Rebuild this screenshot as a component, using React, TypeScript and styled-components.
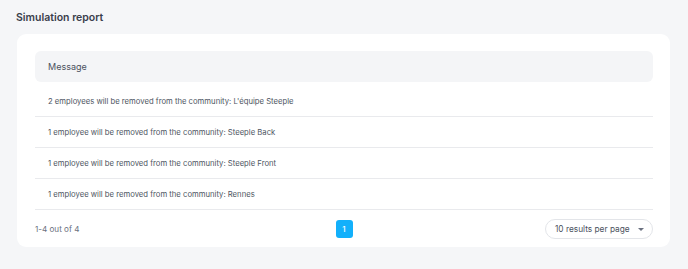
import React from 'react';
import styled, { createGlobalStyle } from 'styled-components';

const GlobalStyle = createGlobalStyle`
  html, body {
    margin: 0;
    padding: 0;
    background: #f5f6f8;
    font-family: Inter, "Noto Sans", sans-serif;
  }
`;

const Page = styled.div`
  width: 688px;
  height: 269px;
  box-sizing: border-box;
  padding: 11px 18px 0 16px;
`;

const Title = styled.h1`
  margin: 0 0 9px 0;
  font-size: 10.5px;
  line-height: 14px;
  font-weight: 600;
  color: #3a404c;
`;

const Card = styled.div`
  margin-left: 1px;
  background: #ffffff;
  border-radius: 9px;
  padding: 17px 17px 8px 18px;
`;

const HeaderRow = styled.div`
  display: flex;
  align-items: center;
  height: 31px;
  margin-bottom: 4px;
  padding: 0 13px;
  background: #f4f5f7;
  border-radius: 6px;
  font-size: 9px;
  color: #4b5260;
`;

const Row = styled.div`
  display: flex;
  align-items: center;
  height: 30px;
  padding: 0 13px;
  border-bottom: 1px solid #e9eaed;
  font-size: 7.7px;
  color: #4e5562;
`;

const Footer = styled.div`
  display: grid;
  grid-template-columns: 1fr auto 1fr;
  align-items: center;
  height: 20px;
  padding-top: 9px;
`;

const Count = styled.span`
  font-size: 8.1px;
  color: #6b7180;
`;

const PageButton = styled.button<{ $active?: boolean }>`
  width: 17px;
  height: 18px;
  padding: 0;
  border: none;
  border-radius: 3px;
  background: ${p => (p.$active ? '#12b0fb' : 'transparent')};
  color: ${p => (p.$active ? '#ffffff' : '#4b5260')};
  font-family: inherit;
  font-size: 8px;
  font-weight: 500;
`;

const SelectBox = styled.div`
  justify-self: end;
  display: flex;
  align-items: center;
  justify-content: space-between;
  box-sizing: border-box;
  width: 108px;
  height: 20px;
  padding: 0 8px 0 9px;
  border: 1px solid #e3e5e9;
  border-radius: 10px;
  font-size: 8.3px;
  color: #4b5260;
`;

const Caret = styled.span`
  width: 0;
  height: 0;
  border-left: 3px solid transparent;
  border-right: 3px solid transparent;
  border-top: 3px solid #6b7180;
`;

const messages = [
  "2 employees will be removed from the community: L'équipe Steeple",
  '1 employee will be removed from the community: Steeple Back',
  '1 employee will be removed from the community: Steeple Front',
  '1 employee will be removed from the community: Rennes',
];

const App = () => (
  <>
    <GlobalStyle />
    <Page>
      <Title>Simulation report</Title>
      <Card>
        <HeaderRow>Message</HeaderRow>
        {messages.map(m => (
          <Row key={m}>{m}</Row>
        ))}
        <Footer>
          <Count>1-4 out of 4</Count>
          <PageButton $active>1</PageButton>
          <SelectBox>
            10 results per page
            <Caret />
          </SelectBox>
        </Footer>
      </Card>
    </Page>
  </>
);

export default App;
